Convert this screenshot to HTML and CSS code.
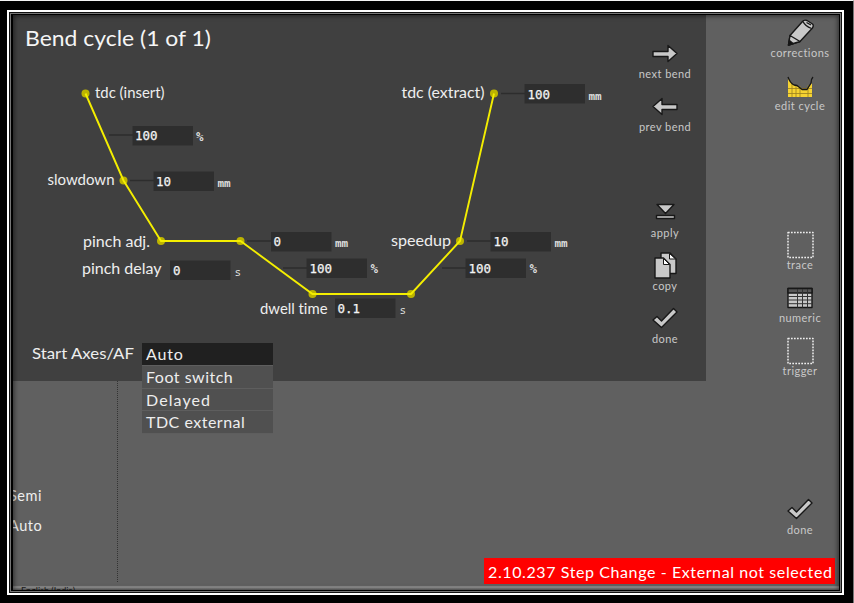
FILE: index.html
```html
<!DOCTYPE html>
<html lang="en">
<head>
<meta charset="utf-8">
<title>Bend cycle</title>
<link rel="stylesheet" href="styles.css">
</head>
<body>
<svg class="defs" aria-hidden="true">
  <symbol id="check" viewBox="0 0 30 28"><path d="M3 15 L7 11.5 L11.5 16 L23.5 3.5 L27 7 L11.5 22.5Z"/></symbol>
</svg>
<div class="bezel">
<main class="screen">
  <div class="work">
    <section class="panel">
      <svg class="diagram" viewBox="13 15 610 366">
        <text class="title" x="25" y="46" textLength="186" lengthAdjust="spacingAndGlyphs">Bend cycle (1 of 1)</text>
        <g class="leads">
          <path d="M109 135H133M130 180.500H154M247 241H271M283 268H307M501 93.500H525M467 241H491M442 268H466"/>
        </g>
        <g class="fields">
          <rect x="132.500" y="126" width="60.500" height="19.500"/>
          <rect x="153.500" y="171.500" width="60.500" height="19.500"/>
          <rect x="170" y="260.500" width="60.500" height="19.500"/>
          <rect x="271" y="232" width="60.500" height="19.500"/>
          <rect x="306.500" y="258.500" width="60.500" height="19.500"/>
          <rect x="335" y="298.500" width="60.500" height="19.500"/>
          <rect x="524.500" y="84" width="60.500" height="19.500"/>
          <rect x="490.500" y="232" width="60.500" height="19.500"/>
          <rect x="465.500" y="258.500" width="60.500" height="19.500"/>
        </g>
        <g class="nodes">
          <circle cx="85.500" cy="93.500" r="4"/><circle cx="123.500" cy="180.500" r="4"/>
          <circle cx="161" cy="241" r="4"/><circle cx="240.500" cy="241" r="4"/>
          <circle cx="312.500" cy="294" r="4"/><circle cx="411" cy="294" r="4"/>
          <circle cx="460" cy="241" r="4"/><circle cx="494" cy="93.500" r="4"/>
        </g>
        <path class="curve" d="M85.500 93.500L123.500 180.500L161 241H240.500L312.500 294H411L460 241L494 93.500"/>
        <g class="labels">
          <text x="95" y="98" textLength="69.500" lengthAdjust="spacingAndGlyphs">tdc (insert)</text>
          <text x="47.500" y="185" textLength="67" lengthAdjust="spacingAndGlyphs">slowdown</text>
          <text x="83" y="247" textLength="67" lengthAdjust="spacingAndGlyphs">pinch adj.</text>
          <text x="82" y="273.500" textLength="79.500" lengthAdjust="spacingAndGlyphs">pinch delay</text>
          <text x="260" y="314" textLength="67.500" lengthAdjust="spacingAndGlyphs">dwell time</text>
          <text x="391" y="245.500" textLength="60" lengthAdjust="spacingAndGlyphs">speedup</text>
          <text x="401.500" y="98" textLength="83" lengthAdjust="spacingAndGlyphs">tdc (extract)</text>
        </g>
        <g class="values">
          <text x="135" y="140">100</text><text x="156" y="185.500">10</text>
          <text x="173" y="275">0</text><text x="273.500" y="246">0</text>
          <text x="309.500" y="272.500">100</text><text x="337.500" y="313">0.1</text>
          <text x="527.500" y="98.500">100</text><text x="493.500" y="246">10</text>
          <text x="468.500" y="272.500">100</text>
        </g>
        <g class="units">
          <text class="pct" x="196" y="141">%</text><text x="217.500" y="187">mm</text>
          <text class="sec" x="234.500" y="276">s</text><text x="335" y="247">mm</text>
          <text class="pct" x="370.500" y="273">%</text><text class="sec" x="399.500" y="314">s</text>
          <text x="588.500" y="100">mm</text><text x="554.500" y="247">mm</text>
          <text class="pct" x="529.500" y="273">%</text>
        </g>
        <text class="option" x="32" y="359" textLength="102" lengthAdjust="spacingAndGlyphs">Start Axes/AF</text>
      </svg>
      <nav class="actions">
        <div class="action"><svg viewBox="0 0 30 28"><path d="M3 11.500H18V5.500L27 13.500L18 21.500V16.500H3Z"/></svg><span>next bend</span></div>
        <div class="action"><svg viewBox="0 0 30 28"><path d="M27 11.500H12V5.500L3 13.500L12 21.500V16.500H27Z"/></svg><span>prev bend</span></div>
        <div class="action gap"><svg viewBox="0 0 30 28"><path d="M7 5.500H24L15.500 14.500ZM6.500 16.500H24.500V19.500H6.500Z"/></svg><span>apply</span></div>
        <div class="action"><svg viewBox="0 0 30 28"><path d="M11 1H20L26 7V21.500H11Z"/><path class="fold" d="M19.500 1.500V7H25.500Z"/><path d="M5 6H13.500L20 12.500V26H5Z"/><path class="fold" d="M13.500 6.500V12.500H19.500Z"/></svg><span>copy</span></div>
        <div class="action"><svg><use href="#check"/></svg><span>done</span></div>
      </nav>
      <ul class="menu">
        <li><span class="w-auto">Auto</span></li><li><span class="w-foot">Foot switch</span></li><li><span class="w-delayed">Delayed</span></li><li><span class="w-tdc">TDC external</span></li>
      </ul>
    </section>
    <section class="below">
      <div class="modes"><span>Semi</span><span>Auto</span></div>
    </section>
  </div>
  <nav class="side">
    <div class="action"><svg viewBox="0 0 30 28"><path d="M3.500 26L5 16.500L17.500 2.500Q19 0.500 22 1.500L27.500 5Q29 6.500 27.500 9L15 22.500Z"/><path d="M5 16.500L15 22.500L3.500 26Z"/><path class="ink" d="M3.500 26L4.500 21.500L8 24.500Z"/><path class="thin" d="M18 2.500Q20 7 26.500 9.500M21.500 3.500L26 6"/></svg><span>corrections</span></div>
    <div class="action"><svg viewBox="0 0 30 28"><path class="yellow" d="M3 6L7 12L14 15L18 18H22L27 11V25H3Z"/><path class="grid" d="M7 11V25M11 13V25M15 14V25M23 13V25M3 16.500H27M3 21.500H27"/><path class="thin" d="M3 5Q5 11 9 13L12 13.500L17 17.500H22L26 11Q26 7 28 5"/></svg><span>edit cycle</span></div>
    <div class="action far"><svg viewBox="0 0 30 28"><rect class="dots" x="3" y="1.500" width="25" height="25"/></svg><span>trace</span></div>
    <div class="action"><svg viewBox="0 0 30 28"><path d="M3 4.500H27V23.500H3Z"/><path class="head" d="M3 4.500H27V9H3Z"/><path class="lines" d="M3 12.500H27M3 16H27M3 19.700H27M12.500 5V23.500M17.500 5V23.500M22.500 5V23.500"/></svg><span>numeric</span></div>
    <div class="action"><svg viewBox="0 0 30 28"><rect class="dots" x="3" y="1.500" width="25" height="25"/></svg><span>trigger</span></div>
    <div class="action end"><svg><use href="#check"/></svg><span>done</span></div>
  </nav>
  <div class="status"><span>2.10.237 Step Change - External not selected</span></div>
  <div class="taskbar">English (India)</div>
  <div class="shade"></div>
</main>
</div>
</body>
</html>
```
FILE: styles.css
```css
* { box-sizing: border-box; }
body {
  margin: 0; width: 854px; height: 603px; overflow: hidden;
  padding: 9px 9px 8px 7px;
  background: #000; border-top: 1px solid #f4f4f4; border-right: 1px solid #777;
  font-family: Lato, "Liberation Sans", sans-serif; color: #eee;
  font-variant-ligatures: none;
}
.defs { position: absolute; width: 0; height: 0; }
.bezel {
  width: 837px; height: 585px; border: 2px solid #fff;
  box-shadow: inset 0 0 0 1px #111, inset 0 0 0 2px #777;
  background: #000; padding: 3px 3px 3px 4px;
}
.screen {
  position: relative; display: grid; grid-template-columns: 693px 1fr;
  width: 826px; height: 575px; background: #606060; overflow: hidden;
}
.work { display: grid; grid-template-rows: 366px 1fr; }
.panel { position: relative; display: flex; background: #404040; }
.diagram { width: 610px; height: 366px; flex: none; }
.title { font-size: 21px; fill: #f5f5f5; }
.labels { font-size: 15px; fill: #eee; }
.option { font-size: 16px; fill: #eee; }
.leads path { stroke: #2d2d2d; stroke-width: 1.5; }
.fields rect { fill: #2e2e2e; }
.nodes circle { fill: #bdb400; }
.curve { fill: none; stroke: #f4ee00; stroke-width: 1.9; }
.values { font: 12.5px "DejaVu Sans Mono", monospace; fill: #f4f4f4; stroke: #f4f4f4; stroke-width: .25; }
.units { font: bold 11px "DejaVu Sans Mono", monospace; fill: #ddd; }
.units .pct { font-size: 12.5px; }
.units .sec { font-weight: normal; }
.actions { width: 83px; padding: 25px 0 0; }
.side { padding: 4px 0 0; }
.actions .action { margin-left: -3px; }
.action { display: flex; flex-direction: column; align-items: center; width: 90px; height: 53px; }
.side .action { width: 132px; margin-left: 28px; }
.action svg { width: 30px; height: 28px; flex: none; fill: #c8c8c8; stroke: #171717; stroke-width: 1.4; stroke-linejoin: round; }
.action span { margin-top: -1px; font-size: 11px; line-height: 13px; color: #c8c8c8; letter-spacing: .45px; white-space: nowrap; }
.gap { margin-top: 53px; }
.far { margin-top: 106px; }
.end { margin-top: 106px; }
.fold { fill: #fff; stroke-width: 1; }
.ink { fill: #111; }
.thin { fill: none; stroke-width: 1.3; }
.yellow { fill: #f6d332; stroke: none; }
.grid { stroke: #9b801e; stroke-width: .8; }
.dots { fill: none; stroke: #eee; stroke-width: 1.5; stroke-dasharray: 1.7 1.3; }
.head { fill: #555; }
.lines { stroke: #333; stroke-width: 1; }
.menu {
  position: absolute; left: 129px; top: 328px; width: 131px; margin: 0; padding: 0;
  list-style: none; font-size: 16px; display: grid; grid-template-rows: 23px 23px 22px 23px;
}
.menu li { background: #505050; border-bottom: 1px solid #5e5e5e; padding-left: 4px; line-height: 22px; white-space: nowrap; }
.menu li:first-child { background: #202020; }
.w-auto { letter-spacing: .8px; }
.w-foot { letter-spacing: .5px; }
.w-delayed { letter-spacing: 1.1px; }
.w-tdc { letter-spacing: .5px; }
.below { padding-top: 105px; width: 105px; border-right: 1px dotted #343434; height: 201px; }
.modes { display: flex; flex-direction: column; margin-left: -4px; font-size: 14.5px; line-height: 20px; gap: 10px; letter-spacing: .5px; }
.status {
  position: absolute; right: 4px; bottom: 6px; width: 351px; height: 26px;
  background: #f00; color: #fff; font-size: 16px; line-height: 28px;
  padding-left: 4px; white-space: nowrap; letter-spacing: .6px;
}
.taskbar {
  position: absolute; left: 0; right: 0; bottom: 0; height: 5px; overflow: hidden;
  background: linear-gradient(#505050, #a0a0a0 40%, #777); color: #222;
  font-size: 9px; line-height: 11px; padding-left: 8px;
}
.shade { position: absolute; inset: 0; box-shadow: inset 0 0 5px 1px rgba(0,0,0,.55); pointer-events: none; }
```
